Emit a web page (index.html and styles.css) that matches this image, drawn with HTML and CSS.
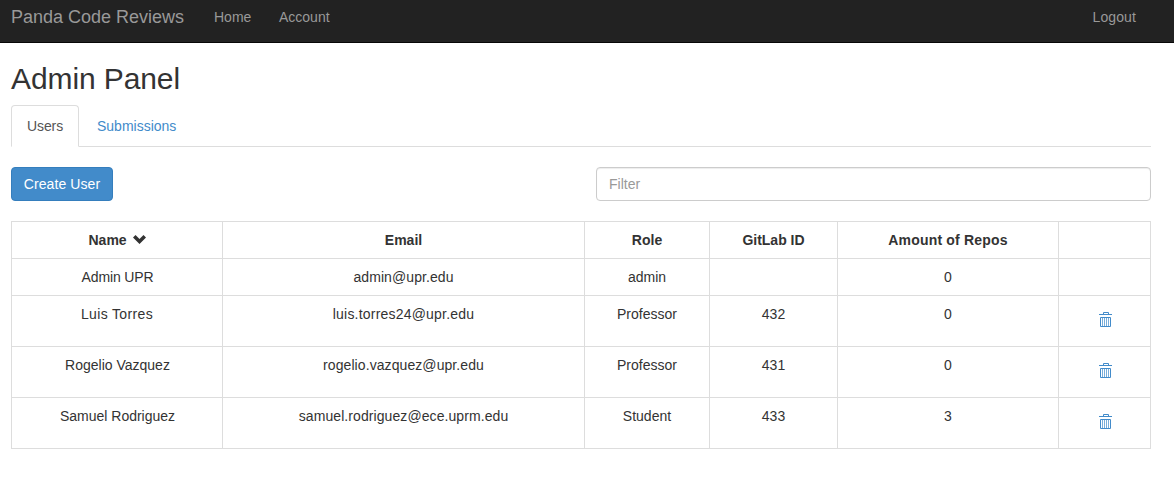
FILE: index.html
```html
<!DOCTYPE html>
<html lang="en">
<head>
<meta charset="utf-8">
<title>Panda Code Reviews</title>
<link rel="stylesheet" href="styles.css">
</head>
<body>
<svg class="sprite" aria-hidden="true">
  <symbol id="trash" viewBox="0 0 13 15">
    <path fill="none" stroke="currentColor" d="M4.500 2V0.500H9.500V2M1.500 5.500H11.500V14.500H1.500Z"/>
    <path fill="none" stroke="currentColor" stroke-opacity=".7" d="M3.500 6V14M5.500 6V14M7.500 6V14M9.500 6V14"/>
    <path fill="currentColor" d="M0 2H13V3H0Z"/>
  </symbol>
</svg>
<nav class="navbar">
  <a class="brand">Panda Code Reviews</a>
  <a class="nav-link home">Home</a>
  <a class="nav-link">Account</a>
  <a class="nav-link logout">Logout</a>
</nav>
<main class="container">
  <h2 class="title">Admin Panel</h2>
  <div class="tabs">
    <a class="tab active">Users</a>
    <a class="tab">Submissions</a>
  </div>
  <div class="toolbar">
    <button class="create">Create User</button>
    <input class="filter" type="text" placeholder="Filter">
  </div>
  <table class="users">
    <colgroup><col class="c-name"><col class="c-email"><col class="c-role"><col class="c-id"><col class="c-repos"><col class="c-action"></colgroup>
    <thead>
      <tr><th>Name <svg class="chevron" viewBox="0 0 13 9"><path fill="currentColor" d="M2.500 0L6.500 4L10.500 0L13 2.500L6.500 9L0 2.500Z"/></svg></th><th>Email</th><th>Role</th><th>GitLab ID</th><th class="repos">Amount of Repos</th><th></th></tr>
    </thead>
    <tbody>
      <tr><td class="narrow">Admin UPR</td><td class="email">admin@upr.edu</td><td>admin</td><td></td><td>0</td><td></td></tr>
      <tr class="tall"><td class="wide">Luis Torres</td><td class="email luis">luis.torres24@upr.edu</td><td>Professor</td><td>432</td><td>0</td><td><svg class="trash"><use href="#trash"/></svg></td></tr>
      <tr class="tall"><td class="name">Rogelio Vazquez</td><td class="email">rogelio.vazquez@upr.edu</td><td>Professor</td><td>431</td><td>0</td><td><svg class="trash"><use href="#trash"/></svg></td></tr>
      <tr class="tall"><td class="name">Samuel Rodriguez</td><td class="email">samuel.rodriguez@ece.uprm.edu</td><td>Student</td><td>433</td><td>3</td><td><svg class="trash"><use href="#trash"/></svg></td></tr>
    </tbody>
  </table>
</main>
</body>
</html>
```
FILE: styles.css
```css
* { box-sizing: border-box; }
body {
  margin: 0;
  background: #fff;
  color: #333;
  font: 14px/20px "Liberation Sans", Arial, sans-serif;
}
.sprite { display: none; }
.navbar {
  display: flex;
  height: 43px;
  padding: 7px 23px 0 11px;
  background: #222;
  border-bottom: 1px solid #080808;
  color: #999;
}
.brand { width: 188px; font-size: 18px; white-space: nowrap; }
.nav-link { padding: 0 15px; }
.home { width: 65px; }
.navbar .logout { margin-left: auto; letter-spacing: .1px; }
.container { width: 1140px; margin-left: 11px; }
.title {
  margin: 0;
  padding: 19px 0 10px;
  font-size: 30px;
  font-weight: 400;
  line-height: 33px;
  letter-spacing: -.1px;
}
.tabs { display: flex; gap: 2px; height: 42px; border-bottom: 1px solid #ddd; }
.tab {
  height: 42px;
  padding: 10px 15px;
  border: 1px solid transparent;
  color: #428bca;
}
.active {
  width: 68px;
  background: #fff;
  color: #555;
  border-color: #ddd #ddd #fff;
  border-radius: 4px 4px 0 0;
  letter-spacing: -.1px;
}
.toolbar { display: flex; justify-content: space-between; margin: 20px 0; }
.create {
  width: 102px;
  height: 34px;
  padding: 0;
  border: 1px solid #357ebd;
  border-radius: 4px;
  background: #428bca;
  color: #fff;
  font: inherit;
  letter-spacing: .08px;
}
.filter {
  width: 555px;
  height: 34px;
  padding: 6px 12px;
  border: 1px solid #ccc;
  border-radius: 4px;
  box-shadow: inset 0 1px 1px rgba(0, 0, 0, .075);
  color: #555;
  font: inherit;
}
.filter::placeholder { color: #999; opacity: 1; }
.users { width: 1140px; table-layout: fixed; border-collapse: collapse; text-align: center; }
.c-name { width: 211px; }
.c-email { width: 362px; }
.c-role { width: 125px; }
.c-id { width: 128px; }
.c-repos { width: 221px; }
.c-action { width: 92px; }
.users th, .users td { height: 37px; padding: 8px; border: 1px solid #ddd; vertical-align: top; }
.users .tall td { height: 51px; }
.users .name, .users .narrow { padding-left: 9px; }
.narrow { letter-spacing: -.15px; }
.wide { letter-spacing: .35px; }
.email { letter-spacing: .08px; }
.luis { letter-spacing: .2px; }
.repos { letter-spacing: .2px; }
.chevron { width: 13px; height: 9px; margin-left: 2px; vertical-align: 1px; }
.trash { display: block; width: 13px; height: 15px; margin: 8px 0 0 32px; color: #428bca; }
```
